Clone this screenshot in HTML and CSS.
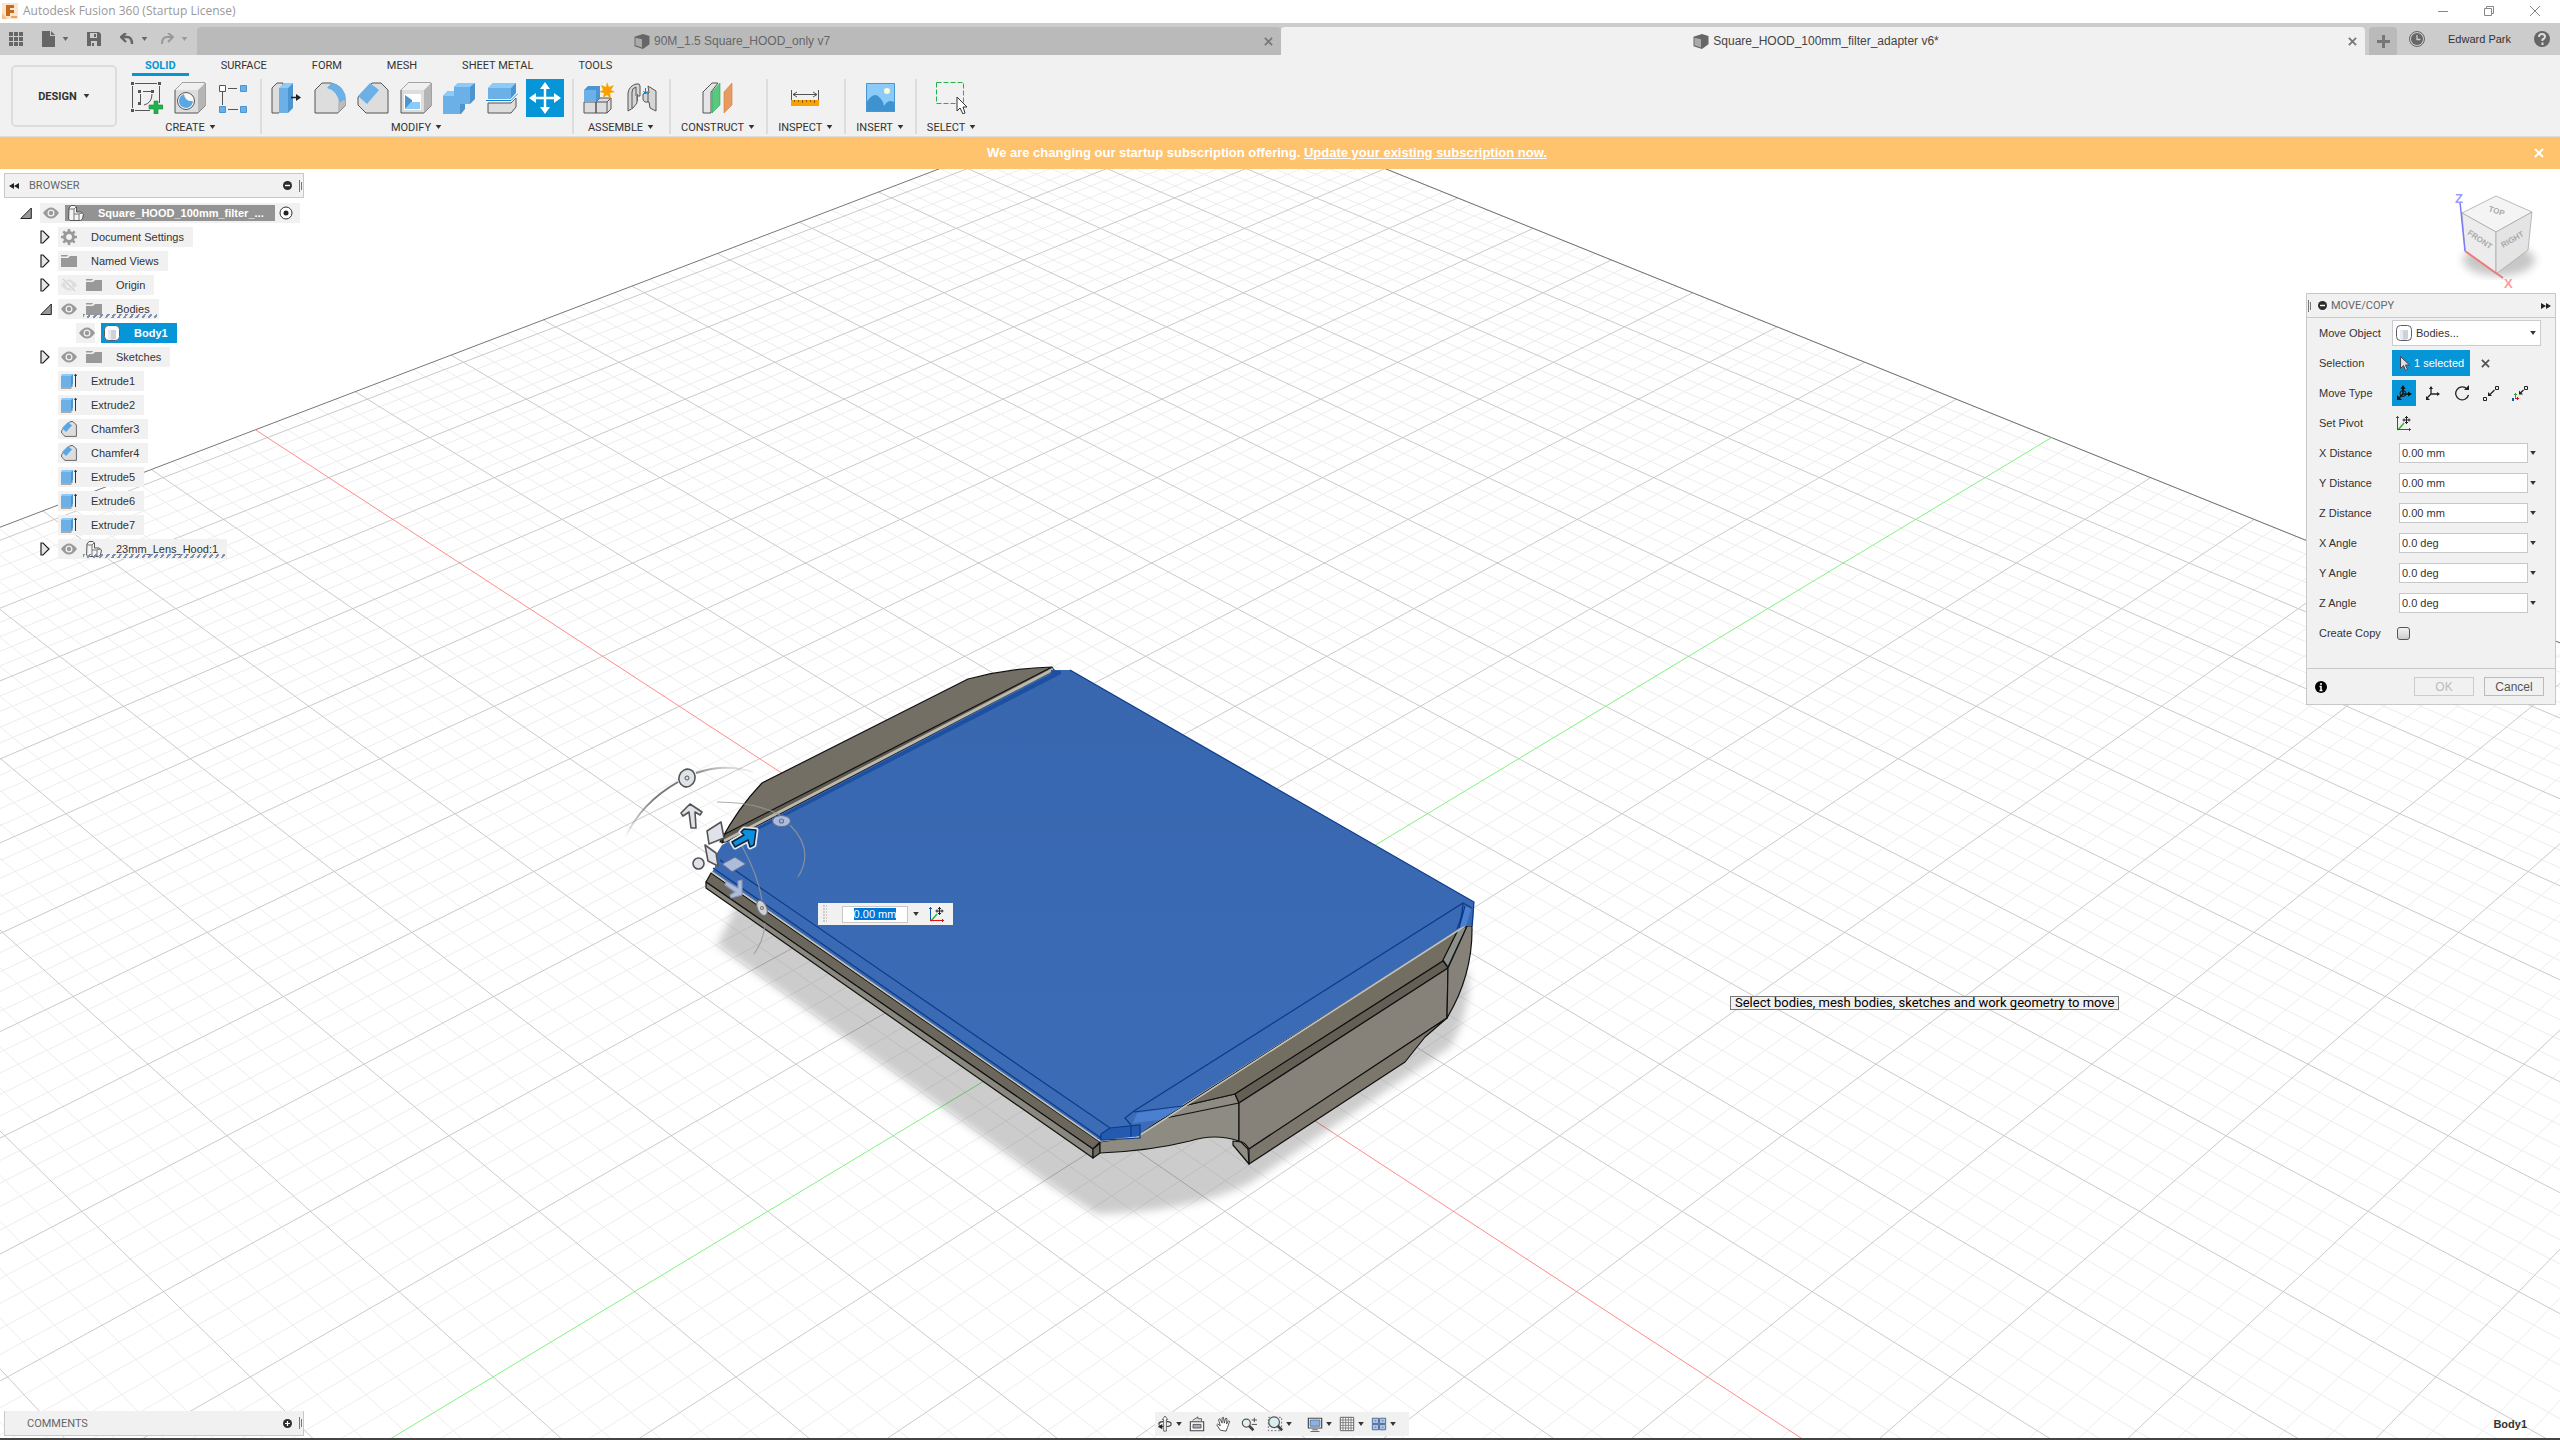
FILE: index.html
```html
<!DOCTYPE html>
<html lang="en">
<head>
    <meta charset="UTF-8">
    <meta name="viewport" content="width=device-width, initial-scale=1.0">
    <title>Autodesk Fusion 360 (Startup License)</title>
    <link rel="stylesheet" href="styles.css">
</head>
<body>
    <!-- shared icons -->
    <svg class="defs" aria-hidden="true">
        <symbol id="i-caret" viewBox="0 0 7 5"><path d="M0 0h7L3.5 5z" fill="currentColor"/></symbol>
        <symbol id="i-eye" viewBox="0 0 16 16"><path d="M0 8Q4 2.500 8 2.500T16 8Q12 13.500 8 13.500T0 8z" fill="#999"/><circle cx="8" cy="8" r="3.500" fill="#f1f1f1"/><circle cx="8" cy="8" r="2.200" fill="#999"/></symbol>
        <symbol id="i-eye-off" viewBox="0 0 16 16"><path d="M0 8Q4 2.500 8 2.500T16 8Q12 13.500 8 13.500T0 8z" fill="#dedede"/><circle cx="8" cy="8" r="3" fill="#f1f1f1"/><path d="M2 2l12 12" stroke="#f1f1f1" stroke-width="3"/><path d="M2 2l12 12" stroke="#d4d4d4" stroke-width="1.500"/></symbol>
        <symbol id="i-folder" viewBox="0 0 16 16"><path d="M0 2h7l-1 1.500H0zM0 5h7l2-2h7v11H0z" fill="#999"/></symbol>
        <symbol id="i-gear" viewBox="0 0 16 16"><circle cx="8" cy="8" r="4.500" fill="none" stroke="#999" stroke-width="3"/><path d="M8 0v3M8 13v3M0 8h3M13 8h3M2.300 2.300l2 2M11.700 11.700l2 2M2.300 13.700l2-2M11.700 4.300l2-2" stroke="#999" stroke-width="2.600"/></symbol>
        <symbol id="i-extrude" viewBox="0 0 16 16"><path d="M0 14l3-2h9v1l-2 3H0z" fill="#aaa"/><path d="M0 3l2-2h10v10l-2 3H0z" fill="#4b96d1"/><path d="M0 3h10v11H0z" fill="#6bb1e8"/><path d="M0 3l2-2h10l-2 2z" fill="#8acbfa"/><path d="M14.500 14V2M13.500 3l1-2 1 2" stroke="#333" fill="none"/></symbol>
        <symbol id="i-chamfer" viewBox="0 0 16 16"><path d="M.6 9.500L9 .6h3l3.400 3.400v11.400H4L.6 12z" fill="#ddd" stroke="#666"/><path d="M1 7l6-6 4 3.500-6 6.500z" fill="#5ba7e3"/></symbol>
        <symbol id="i-component" viewBox="0 0 16 16"><path d="M1 3l2-2.500h4L8.500 2v5H13l2.500 2-1 5-2 1.500H2L.6 14z" fill="#f4f4f4" stroke="#555"/><path d="M1 4h5v11M6 9h5l3-1M11 9v6M6 4l2-2" fill="none" stroke="#777"/></symbol>
        <symbol id="i-body" viewBox="0 0 16 16"><rect x=".5" y=".5" width="15" height="15" rx="4" fill="#fff" stroke="#555c6b"/><path d="M4 5h8v9q-4 1.500-8 0z" fill="#ccd2da"/><path d="M4 5h3v9.500l-3-.5z" fill="#e8ebef"/></symbol>
        <symbol id="i-open" viewBox="0 0 12 12"><path d="M.8 11.500L11.300 1v10.500z" fill="#999" stroke="#222"/></symbol>
        <symbol id="i-closed" viewBox="0 0 10 14"><path d="M1 1v12h2l6-6-6-6z" fill="#e6e6e6" stroke="#222" stroke-width="1.200"/></symbol>
        <symbol id="i-doc" viewBox="0 0 16 16"><path d="M0 3l9-3 7 2v9l-7 5-9-3z" fill="currentColor"/><path d="M1 4l7 1.500v9L1 12z" fill="#aaa"/></symbol>
        <symbol id="i-minus" viewBox="0 0 9 9"><circle cx="4.500" cy="4.500" r="4.500" fill="#2d2d2d"/><path d="M2 4.500h5" stroke="#fff" stroke-width="1.400"/></symbol>
        <symbol id="i-plus" viewBox="0 0 9 9"><circle cx="4.500" cy="4.500" r="4.500" fill="#2d2d2d"/><path d="M2 4.500h5M4.500 2v5" stroke="#fff" stroke-width="1.200"/></symbol>
        <symbol id="i-grip" viewBox="0 0 4 12"><path d="M.5 0v12M2.500 2v8" stroke="#777"/></symbol>
        <symbol id="i-rewind" viewBox="0 0 10 6"><path d="M5 0v6L0 3zM10 0v6L5 3z" fill="#222"/></symbol>
        <symbol id="i-pivot" viewBox="0 0 16 16"><path d="M2 15L8 8" stroke="#2fb52f" stroke-width="1.500"/><path d="M1.500 14V1M0 2.500h3" stroke="#0b5cad"/><path d="M1 14.500h14M13.500 13v3" stroke="#d11"/><path d="M10.500 1v8M6.500 5h8M9 2.500h3M9 7.500h3M8 3.500v3M13 3.500v3" stroke="#222"/></symbol>
        <symbol id="i-x" viewBox="0 0 10 10"><path d="M1 1l8 8M9 1L1 9" stroke="currentColor" stroke-width="2"/></symbol>
    </svg>

    <header>
        <div class="titlebar">
            <svg class="app-logo" viewBox="0 0 16 16"><path d="M0 0h16v16H0z" fill="#fde5cd"/><path d="M0 10l5 6H0z" fill="#f6bd85"/><path d="M4 2h8v3H8v2h4v3H8v3H4z" fill="#c46a1c"/><path d="M9 13h6v2H9z" fill="#f3a35c"/></svg>
            <h1>Autodesk Fusion 360 (Startup License)</h1>
            <div class="window-buttons">
                <button aria-label="Minimize"><svg viewBox="0 0 10 10"><path d="M0 5.500h10"/></svg></button>
                <button aria-label="Restore"><svg viewBox="0 0 10 10"><path d="M.5 2.500h7v7h-7zM2.500 2.500v-2h7v7h-2"/></svg></button>
                <button aria-label="Close"><svg viewBox="0 0 10 10"><path d="M0 0l10 10M10 0L0 10"/></svg></button>
            </div>
        </div>

        <div class="tabbar">
            <div class="quick">
                <button class="q-grid" aria-label="Data panel"><svg width="14" height="14" viewBox="0 0 14 14"><path d="M0 0h4v4H0zM5 0h4v4H5zM10 0h4v4h-4zM0 5h4v4H0zM5 5h4v4H5zM10 5h4v4h-4zM0 10h4v4H0zM5 10h4v4H5zM10 10h4v4h-4z" fill="#666"/></svg></button>
                <button class="q-file" aria-label="File"><svg width="13" height="16" viewBox="0 0 13 16"><path d="M0 0h8v5h5v11H0z" fill="#666"/><path d="M9 0l4 4H9z" fill="#666"/></svg><svg class="caret"><use href="#i-caret"/></svg></button>
                <button class="q-save" aria-label="Save"><svg width="14" height="14" viewBox="0 0 14 14"><path d="M0 0h12l2 2v12H0z" fill="#666"/><path d="M3 1h7v5H3zM4 9h6v5H4z" fill="#ccc"/><path d="M7 2h2v3H7zM5 11h2v3H5z" fill="#666"/></svg></button>
                <button class="q-undo" aria-label="Undo"><svg width="14" height="12" viewBox="0 0 14 12"><path d="M6 0L1 4l5 5M1 4h6q5 0 5 7" fill="none" stroke="#666" stroke-width="2.400"/></svg><svg class="caret"><use href="#i-caret"/></svg></button>
                <button class="q-redo" aria-label="Redo"><svg width="14" height="12" viewBox="0 0 14 12"><path d="M8 0l5 4-5 5M13 4H7q-5 0-5 7" fill="none" stroke="#999" stroke-width="2"/></svg><svg class="caret"><use href="#i-caret"/></svg></button>
            </div>
            <div class="doc-tab">
                <svg class="doc-icon"><use href="#i-doc"/></svg>
                <span>90M_1.5 Square_HOOD_only v7</span>
                <button class="tab-close" aria-label="Close tab"><svg><use href="#i-x"/></svg></button>
            </div>
            <div class="doc-tab active">
                <svg class="doc-icon"><use href="#i-doc"/></svg>
                <span>Square_HOOD_100mm_filter_adapter v6*</span>
                <button class="tab-close" aria-label="Close tab"><svg><use href="#i-x"/></svg></button>
            </div>
            <button class="new-tab" aria-label="New tab"><svg width="13" height="13" viewBox="0 0 13 13"><path d="M0 6.500h13M6.500 0v13" stroke="#777" stroke-width="3"/></svg></button>
            <div class="account">
                <button aria-label="Job status"><svg width="16" height="16" viewBox="0 0 16 16"><circle cx="8" cy="8" r="7.500" fill="none" stroke="#666"/><circle cx="8" cy="8" r="6" fill="#666"/><path d="M8 4v4.500h3.500" fill="none" stroke="#ccc" stroke-width="1.300"/></svg></button>
                <button class="user">Edward Park</button>
                <button aria-label="Help"><svg width="16" height="16" viewBox="0 0 16 16"><circle cx="8" cy="8" r="8" fill="#666"/><path d="M5 6q0-3 3-3t3 2.700Q11 7.500 8.500 8.500V10M8.500 11.500V14" fill="none" stroke="#ddd" stroke-width="2"/></svg></button>
            </div>
        </div>

        <div class="ribbon">
            <button class="workspace">DESIGN <svg class="caret"><use href="#i-caret"/></svg></button>
            <div class="ribbon-main">
                <nav class="ribbon-tabs">
                    <button class="on">SOLID</button>
                    <button>SURFACE</button>
                    <button>FORM</button>
                    <button>MESH</button>
                    <button>SHEET METAL</button>
                    <button>TOOLS</button>
                </nav>
                <div class="groups">
                    <div class="group">
                        <div class="tools">
                            <button aria-label="Create sketch"><svg viewBox="0 0 32 32"><path d="M4 1.500h22M1.500 4v22M28.500 4v17M4 28.500h15M12 9.500h8M9.500 12v8M21 12q0 9-8 11" fill="none" stroke="#555"/><path d="M0 0h3v3H0zM27 0h3v3h-3zM0 27h3v3H0zM7 8h3v3H7zM20 8h3v3h-3zM7 20h3v3H7z" fill="#555"/><path d="M23 19h4v4h5v4h-5v5h-4v-5h-5v-4h5z" fill="#22b14c" stroke="#178a39" stroke-width=".6"/></svg></button>
                            <button aria-label="Create form"><svg viewBox="0 0 32 32"><path d="M1 8l7-7h23v23l-7 7H1z" fill="#ddd" stroke="#555"/><path d="M24 8l7-7v23l-7 7z" fill="#b5b5b5"/><path d="M1 8l7-7h23l-7 7z" fill="#efefef"/><circle cx="12" cy="19" r="8.500" fill="#f8f8f8" stroke="#555"/><path d="M10 12q1 8 9 7-1 7-7 7-7-1-7-7 0-5 5-7z" fill="#5ba7e3"/></svg></button>
                            <button aria-label="Derive"><svg viewBox="0 0 32 32"><path d="M11 6.500h9M5.500 10v13M11 27.500h10" stroke="#555"/><path d="M2.500 3.500h6v6h-6z" fill="#fff" stroke="#555"/><path d="M23.500 3.500h6v6h-6zM2.500 24.500h6v6h-6zM23.500 24.500h6v6h-6z" fill="#6bb1e8" stroke="#4b96d1"/></svg></button>
                        </div>
                        <button class="group-label">CREATE <svg class="caret"><use href="#i-caret"/></svg></button>
                    </div>
                    <div class="group">
                        <div class="tools">
                            <button aria-label="Press pull"><svg viewBox="0 0 32 32"><path d="M1 6l5-5h6v25l-4 5H1z" fill="#ddd" stroke="#555"/><path d="M8 6h9v25H8z" fill="#6bb1e8"/><path d="M8 6l5-5h9l-5 5z" fill="#8acbfa"/><path d="M17 6l5-5v25l-5 5z" fill="#4b96d1"/><path d="M20 15.500h7" stroke="#222" stroke-width="1.500"/><path d="M25 12l5 3.500-5 3.500z" fill="#222"/></svg></button>
                            <button aria-label="Fillet"><svg viewBox="0 0 32 32"><path d="M1 31V8l7-7h9q14 3 14 18v5l-7 7z" fill="#ddd" stroke="#555"/><path d="M24 21l7-3v6l-7 7z" fill="#bbb"/><path d="M13 6q4-5 6-5 12 4 13 16l-7 4Q24 9 13 6z" fill="#6bb1e8"/></svg></button>
                            <button aria-label="Chamfer"><svg viewBox="0 0 32 32"><path d="M1 15v8l8 8h22V8l-7-7h-9z" fill="#ddd" stroke="#555"/><path d="M1 14L13 1l9 7-12 14z" fill="#6bb1e8"/></svg></button>
                            <button aria-label="Shell"><svg viewBox="0 0 32 32"><path d="M1 8l7-7h23v23l-7 7H1z" fill="#ddd" stroke="#555"/><path d="M24 8l7-7v23l-7 7z" fill="#b5b5b5"/><path d="M1 8l7-7h23l-7 7z" fill="#efefef"/><path d="M4 12h17v16H4z" fill="#fff"/><path d="M5 13l7 5v3l-7 6z" fill="#4b96d1"/><path d="M5 27l6-7h9v7z" fill="#8acbfa"/></svg></button>
                            <button aria-label="Combine"><svg viewBox="0 0 32 32"><path d="M0 14l5-5h6V5l4-4h17v16l-5 5h-5v5l-4 5H0z" fill="#4b96d1"/><path d="M0 14h11V5h16v17H17v10H0z" fill="#6bb1e8"/><path d="M11 5l4-4h17l-5 4zM0 14l5-5h6v5z" fill="#8acbfa"/></svg></button>
                            <button aria-label="Split body"><svg viewBox="0 0 32 32"><path d="M2 6l5-5h23l-5 5v11H2z" fill="#6bb1e8"/><path d="M2 6l5-5h23l-5 5z" fill="#8acbfa"/><path d="M25 6l5-5v10l-5 6z" fill="#4b96d1"/><path d="M2 21h23l5-5v9l-5 6H2z" fill="#ddd" stroke="#555"/><path d="M0 18.500h25l7-7" fill="none" stroke="#fff" stroke-width="3"/><path d="M0 18.500h25l7-7" fill="none" stroke="#0a84d8"/></svg></button>
                            <button class="active" aria-label="Move/Copy"><svg viewBox="0 0 32 32"><path d="M16 5v22M5 16h22" stroke="#fff" stroke-width="2.400"/><path d="M16 0l5 7H11zM16 32l5-7H11zM0 16l7-5v10zM32 16l-7-5v10z" fill="#fff"/></svg></button>
                        </div>
                        <button class="group-label">MODIFY <svg class="caret"><use href="#i-caret"/></svg></button>
                    </div>
                    <div class="group">
                        <div class="tools">
                            <button aria-label="New component"><svg viewBox="0 0 32 32"><path d="M1 20h12v11H1zM13 20l4-4h11v11l-4 4H13z" fill="#ddd" stroke="#555"/><path d="M13 20h11v11M24 20l4-4" fill="none" stroke="#555"/><path d="M1 8l4-4h12v12l-4 4H1z" fill="#4b96d1"/><path d="M1 8h12v12H1z" fill="#6bb1e8"/><path d="M24 0l2 5 5-2-3 5 4 2-5 1 1 6-4-4-4 3 1-5-5-1 4-2-2-5 5 2z" fill="#f8a100"/></svg></button>
                            <button aria-label="Joint"><svg viewBox="0 0 32 32"><path d="M2 11q1-7 8-9 4-1 4 2v10h-3v7l-4 5-5 3z" fill="#d5d5d5" stroke="#555"/><path d="M6 10q0-4 4-5v9M6 10v16" fill="none" stroke="#555"/><path d="M22 4l8 5v20l-6-3-1-6h-4q-2-1-2-3v-5q3-2 6-1z" fill="#d5d5d5" stroke="#555"/><path d="M22 11v9" fill="none" stroke="#555"/><path d="M11.500 12v7M19.500 6v6M17.500 9l2 3 2-3" fill="none" stroke="#0a84d8"/></svg></button>
                        </div>
                        <button class="group-label">ASSEMBLE <svg class="caret"><use href="#i-caret"/></svg></button>
                    </div>
                    <div class="group">
                        <div class="tools">
                            <button aria-label="Offset plane"><svg viewBox="0 0 32 32"><path d="M1 10l9-9h6L9 10v21H1z" fill="#e5e5e5" stroke="#555"/><path d="M10 10l8-9v22l-8 8z" fill="#59c77e" stroke="#2ea85a" stroke-width=".6"/><path d="M22 10l8-9v22l-8 8z" fill="#e89a63" stroke="#d4793a" stroke-width=".6"/></svg></button>
                        </div>
                        <button class="group-label">CONSTRUCT <svg class="caret"><use href="#i-caret"/></svg></button>
                    </div>
                    <div class="group">
                        <div class="tools">
                            <button aria-label="Measure"><svg viewBox="0 0 32 32"><path d="M2.500 8v10M29.500 8v10M4 12.500h24M8 10l-4 2.500L8 15M24 10l4 2.500-4 2.500" fill="none" stroke="#555"/><path d="M2 18h28v6H2z" fill="#f8a100"/><path d="M5.500 18v2M9.500 18v2M13.500 18v3M17.500 18v2M21.500 18v2M25.500 18v3" stroke="#8a5a00"/></svg></button>
                        </div>
                        <button class="group-label">INSPECT <svg class="caret"><use href="#i-caret"/></svg></button>
                    </div>
                    <div class="group">
                        <div class="tools">
                            <button aria-label="Insert image"><svg viewBox="0 0 32 32"><path d="M2 1h29v29H2z" fill="#8acbfa"/><path d="M2 21q7-11 12-7t6 10q5-8 11-3v9H2z" fill="#3d92cf"/><circle cx="23" cy="9" r="3" fill="#fffbd0"/><path d="M2.500 1.500h28v28h-28z" fill="none" stroke="#4b96d1"/></svg></button>
                        </div>
                        <button class="group-label">INSERT <svg class="caret"><use href="#i-caret"/></svg></button>
                    </div>
                    <div class="group">
                        <div class="tools">
                            <button aria-label="Select"><svg viewBox="0 0 32 32"><path d="M1.500.5h27v21h-27z" fill="none" stroke="#22b14c" stroke-dasharray="5 2"/><path d="M22 15v14l3-3 3 6 2-1-2-6h4z" fill="#fff" stroke="#333"/></svg></button>
                        </div>
                        <button class="group-label">SELECT <svg class="caret"><use href="#i-caret"/></svg></button>
                    </div>
                </div>
            </div>
        </div>

        <div class="banner">
            <p>We are changing our startup subscription offering. <a href="#">Update your existing subscription now.</a></p>
            <button aria-label="Dismiss"><svg><use href="#i-x"/></svg></button>
        </div>
    </header>

    <main>
        <svg class="scene" viewBox="0 169 2560 1269" preserveAspectRatio="xMidYMin slice">
            <defs>
                <filter id="soft" x="-10%" y="-10%" width="120%" height="120%"><feGaussianBlur stdDeviation="4"/></filter>
                <linearGradient id="top" x1="0" y1="0" x2="0" y2="1"><stop offset="0" stop-color="#3867b0"/><stop offset="1" stop-color="#3b6cb5"/></linearGradient>
                <linearGradient id="ring1" x1="0" y1="1" x2="1" y2="0"><stop offset="0" stop-color="#777" stop-opacity="0"/><stop offset=".4" stop-color="#777"/><stop offset=".7" stop-color="#777"/><stop offset="1" stop-color="#777" stop-opacity="0"/></linearGradient>
            </defs>
            <g id="grid"></g>

            <path d="M737 905L717 945L1050 1185L1097 1214Q1190 1212 1250 1183L1450 1047Q1472 1010 1468 970L1250 1000z" fill="#000" fill-opacity=".2" filter="url(#soft)"/>

            <!-- hood -->
            <g stroke="#111" stroke-width="1.200" stroke-linejoin="round">
                <path d="M1052 667Q1010 668 968 679L762 783Q738 808 720 842L726 842L1055 672z" fill="#736f64"/>
                <path d="M725 834L1050 668L1056 671L722 843z" fill="#5e5a50"/>
                <path d="M711 873L706 882L1093 1149L1100 1142z" fill="#6c675d"/>
                <path d="M706 882V888L1093 1158V1149z" fill="#8a877e"/>
                <path d="M1100 1143V1153L1093 1158V1149z" fill="#6f6b61"/>
                <path d="M1100 1142L1134 1137L1183 1106L1235 1094L1239 1103V1141Q1215 1133 1190 1141Q1150 1151 1100 1153z" fill="#8e8b83"/>
                <path d="M1465 926L1458 930L1443 961L1235 1094L1183 1106z" fill="#736e62"/>
                <path d="M1443 961L1448 968L1239 1103L1235 1094z" fill="#645f55"/>
                <path d="M1448 968L1447 1018L1249 1149Q1245 1142 1239 1141V1103z" fill="#86827a"/>
                <path d="M1447 1018L1425 1037L1405 1062L1249 1164V1149z" fill="#7b776c"/>
                <path d="M1233 1141V1145L1249 1164L1248 1149L1241 1142z" fill="#8f8c84"/>
                <path d="M1467 926H1472Q1473 975 1447 1018L1448 968z" fill="#86827a"/>
                <path d="M1458 930L1467 926L1448 967L1443 960z" fill="#8b908b"/>
                <path d="M1161 1119L1239 1103" fill="none"/>
            </g>

            <!-- selected body -->
            <path d="M1070 670L1474 902L1473 926H1465L1162 1118L1137 1136L1100 1141L712 872L715 867L717 853L722 845L1050 673L1054 670z" fill="url(#top)"/>
            <path d="M724 841L1048 672L1053 669" fill="none" stroke="#bcb8ae" stroke-width="3"/>
            <path d="M727 843L1051 674V670L1061 671V674L762 828z" fill="#1d50a0"/>
            <path d="M712 872L1100 1141L1137 1137L1465 926" fill="none" stroke="#c6c2b8" stroke-width="1.600"/>
            <path d="M1097 1138L1110 1128L1140 1125V1136L1101 1140z" fill="#245bb0"/>
            <path d="M1137 1113L1183 1106L1160 1120L1133 1123z" fill="#4b80d0"/>
            <path d="M1465 906L1471 909L1466 926L1459 928z" fill="#4b80d0"/>
            <path d="M1070 670L1474 902L1472 926M713 868L1101 1138M720 860L1110 1128L1140 1125V1138L1101 1140V1134L1110 1128M1131 1125L1125 1118L1134 1111L1463 903L1472 908M1134 1112L1183 1106M1131 1125V1137M1463 904Q1462 918 1457 929M1465 906L1459 928" fill="none" stroke="#0c3a8a" stroke-width="1.200"/>

            <!-- move manipulator -->
            <g fill="none" stroke="url(#ring1)" stroke-width="2">
                <path d="M625 838Q641 803 678 782M696 773Q725 763 753 772"/>
            </g>
            <g fill="none" stroke="#999" stroke-width="1.200">
                <path d="M717 802Q755 802 780 815M790 825Q815 850 798 877M742 846Q758 875 762 900M765 923Q764 940 754 954" stroke-opacity=".8"/>
            </g>
            <g fill="#dfe2e8" stroke="#555" stroke-width="1.600" stroke-linejoin="round">
                <ellipse cx="687" cy="778" rx="8" ry="9" transform="rotate(20 687 778)"/>
                <circle cx="687" cy="778" r="2" stroke-width="1"/>
                <path d="M690 804L681 813L683 816L689 812L691 828H696L695 812L700 815L702 812z"/>
                <path d="M707 831L721 822L724 838L709 844z"/>
                <path d="M705 845L716 853L718 866L708 861z"/>
                <circle cx="698.500" cy="863.500" r="5.500"/>
            </g>
            <g fill="#aebcdb" stroke="#5c6f9b" stroke-width="1.200" stroke-linejoin="round">
                <ellipse cx="781.500" cy="821" rx="9" ry="5.500"/>
                <circle cx="781.500" cy="821" r="2"/>
                <path d="M722 864L735 857L746 864L732 872z"/>
                <path d="M726 881L738 888V881L742 880V895L731 898L730 895L735 892L725 885z" stroke="#8798bb"/>
                <ellipse cx="762" cy="908" rx="4.500" ry="8" transform="rotate(-25 762 908)" fill="#cfd2d8" stroke="#777"/>
                <circle cx="762" cy="908" r="1.500" fill="#cfd2d8" stroke="#777"/>
            </g>
            <path d="M732 842L744 835L741 832L744 829L756 830L754 845L750 847L748 840L735 847z" fill="#0c8fdc" stroke="#dfe8f6" stroke-width="5" stroke-linejoin="round"/>
            <path d="M732 842L744 835L741 832L744 829L756 830L754 845L750 847L748 840L735 847z" fill="#0c8fdc" stroke="#123" stroke-width="1.500" stroke-linejoin="round"/>
        </svg>

        <section class="browser">
            <div class="panel-head">
                <svg class="rewind"><use href="#i-rewind"/></svg>
                <h2>BROWSER</h2>
                <svg class="dot"><use href="#i-minus"/></svg>
                <svg class="grip"><use href="#i-grip"/></svg>
            </div>
            <ul class="tree">
                <li class="root"><svg class="open"><use href="#i-open"/></svg><div class="chip"><svg><use href="#i-eye"/></svg><span class="name"><svg><use href="#i-component"/></svg>Square_HOOD_100mm_filter_...</span><svg class="target" viewBox="0 0 16 16"><circle cx="8" cy="8" r="6" fill="#fff" stroke="#333"/><circle cx="8" cy="8" r="2.500" fill="#222"/></svg></div></li>
                <li><svg class="closed"><use href="#i-closed"/></svg><div class="chip"><svg><use href="#i-gear"/></svg>Document Settings</div></li>
                <li><svg class="closed"><use href="#i-closed"/></svg><div class="chip"><svg><use href="#i-folder"/></svg>Named Views</div></li>
                <li><svg class="closed"><use href="#i-closed"/></svg><div class="chip"><svg><use href="#i-eye-off"/></svg><span class="name"><svg><use href="#i-folder"/></svg>Origin</span></div></li>
                <li><svg class="open"><use href="#i-open"/></svg><div class="chip"><svg><use href="#i-eye"/></svg><span class="name hatch"><svg><use href="#i-folder"/></svg>Bodies</span></div></li>
                <li class="child"><div class="chip selected"><svg><use href="#i-eye"/></svg><span class="name"><svg><use href="#i-body"/></svg>Body1</span></div></li>
                <li><svg class="closed"><use href="#i-closed"/></svg><div class="chip"><svg><use href="#i-eye"/></svg><span class="name"><svg><use href="#i-folder"/></svg>Sketches</span></div></li>
                <li class="feature"><div class="chip"><svg><use href="#i-extrude"/></svg>Extrude1</div></li>
                <li class="feature"><div class="chip"><svg><use href="#i-extrude"/></svg>Extrude2</div></li>
                <li class="feature"><div class="chip"><svg><use href="#i-chamfer"/></svg>Chamfer3</div></li>
                <li class="feature"><div class="chip"><svg><use href="#i-chamfer"/></svg>Chamfer4</div></li>
                <li class="feature"><div class="chip"><svg><use href="#i-extrude"/></svg>Extrude5</div></li>
                <li class="feature"><div class="chip"><svg><use href="#i-extrude"/></svg>Extrude6</div></li>
                <li class="feature"><div class="chip"><svg><use href="#i-extrude"/></svg>Extrude7</div></li>
                <li><svg class="closed"><use href="#i-closed"/></svg><div class="chip"><svg><use href="#i-eye"/></svg><span class="name hatch"><svg><use href="#i-component"/></svg>23mm_Lens_Hood:1</span></div></li>
            </ul>
        </section>

        <aside>
            <svg class="viewcube" width="100" height="106" viewBox="2446 187 100 106">
                <ellipse cx="2499" cy="260" rx="36" ry="16" fill="#000" fill-opacity=".22" filter="url(#soft)"/>
                <g fill="#ececec" stroke="#aaa" stroke-width=".8">
                    <path d="M2496 196L2532 212L2496 232L2462 213z" fill="#f4f4f4"/>
                    <path d="M2462 213L2496 232V274L2465 251z"/>
                    <path d="M2532 212L2496 232V274L2528 250z" fill="#e4e4e4"/>
                </g>
                <path d="M2460 202L2465 251" stroke="#7a7af5" stroke-width="1.500"/>
                <path d="M2465 251L2503 278" stroke="#ee7b7b" stroke-width="2"/>
                <text x="2455" y="203" class="axis-z">Z</text>
                <text x="2504" y="288" class="axis-x">X</text>
                <text class="face" transform="translate(2488 211) rotate(18)">TOP</text>
                <text class="face" transform="translate(2467 234) rotate(34)">FRONT</text>
                <text class="face" transform="translate(2503 248) rotate(-30)">RIGHT</text>
            </svg>

            <form class="dialog">
                <div class="dialog-head">
                    <svg class="grip"><use href="#i-grip"/></svg>
                    <svg class="dot"><use href="#i-minus"/></svg>
                    <h2>MOVE/COPY</h2>
                    <svg class="rewind forward"><use href="#i-rewind"/></svg>
                </div>
                <div class="rows">
                    <div class="row">
                        <label for="object">Move Object</label>
                        <div class="select-wrap"><svg class="select-icon"><use href="#i-body"/></svg><select id="object"><option>Bodies...</option></select><svg class="caret"><use href="#i-caret"/></svg></div>
                    </div>
                    <div class="row">
                        <span class="label">Selection</span>
                        <button type="button" class="picker"><svg width="10" height="15" viewBox="0 0 10 15"><path d="M.5.5v12l3-3 2 5 2-1-2-4.500h4z" fill="#ddd" stroke="#445"/></svg>1 selected</button>
                        <button type="button" class="clear" aria-label="Clear selection"><svg><use href="#i-x"/></svg></button>
                    </div>
                    <div class="row types">
                        <span class="label">Move Type</span>
                        <button type="button" class="on" aria-label="Free move"><svg viewBox="0 0 16 16"><path d="M7 2v7h7M7 9l-5 5" fill="none" stroke="#111" stroke-width="1.500"/><path d="M4.500 4L7 0l2.500 4zM12 6.500L16 9l-4 2.500zM1 10v5h5z" fill="#111"/><circle cx="7" cy="8.500" r="3" fill="none" stroke="#111"/></svg></button>
                        <button type="button" aria-label="Translate"><svg viewBox="0 0 16 16"><path d="M6 2v7h8M6 9l-4 4" fill="none" stroke="#222" stroke-width="1.300"/><path d="M4 4l2-3 2 3zM12 7l3 2-3 2zM1 11v4h4z" fill="#222"/></svg></button>
                        <button type="button" aria-label="Rotate"><svg viewBox="0 0 16 16"><path d="M13 4a6.500 6.500 0 1 0 1.500 6" fill="none" stroke="#222" stroke-width="1.300"/><path d="M10 5h5V0z" fill="#222"/></svg></button>
                        <button type="button" aria-label="Point to point"><svg viewBox="0 0 16 16"><path d="M11.500 5L7 9.500" stroke="#222" stroke-width="1.300"/><path d="M5 7v4h4z" fill="#222"/><path d="M12.500 1.500h3v3h-3zM.5 12.500h3v3h-3z" fill="none" stroke="#222"/></svg></button>
                        <button type="button" aria-label="Point to position"><svg viewBox="0 0 16 16"><path d="M11.500 5L8 8.500" stroke="#222" stroke-width="1.300"/><path d="M7 5.500v4h4z" fill="#222"/><path d="M12.500 1.500h3v3h-3z" fill="none" stroke="#222"/><path d="M3.500 13V8M2 9.500h3" stroke="#2a2"/><path d="M3 13.500h4M5.500 12v3" stroke="#d11"/><path d="M0 13h2v3H0z" fill="#0b5cad"/></svg></button>
                    </div>
                    <div class="row">
                        <span class="label">Set Pivot</span>
                        <button type="button" class="pivot" aria-label="Set pivot"><svg><use href="#i-pivot"/></svg></button>
                    </div>
                    <div class="row"><label for="xd">X Distance</label><input type="text" id="xd" value="0.00 mm"><svg class="caret"><use href="#i-caret"/></svg></div>
                    <div class="row"><label for="yd">Y Distance</label><input type="text" id="yd" value="0.00 mm"><svg class="caret"><use href="#i-caret"/></svg></div>
                    <div class="row"><label for="zd">Z Distance</label><input type="text" id="zd" value="0.00 mm"><svg class="caret"><use href="#i-caret"/></svg></div>
                    <div class="row"><label for="xa">X Angle</label><input type="text" id="xa" value="0.0 deg"><svg class="caret"><use href="#i-caret"/></svg></div>
                    <div class="row"><label for="ya">Y Angle</label><input type="text" id="ya" value="0.0 deg"><svg class="caret"><use href="#i-caret"/></svg></div>
                    <div class="row"><label for="za">Z Angle</label><input type="text" id="za" value="0.0 deg"><svg class="caret"><use href="#i-caret"/></svg></div>
                    <div class="row"><label for="copy">Create Copy</label><input type="checkbox" id="copy"></div>
                </div>
                <div class="dialog-foot">
                    <svg class="info" viewBox="0 0 12 12"><circle cx="6" cy="6" r="6"/><path d="M6 2v2M4.500 5.500H6V9M4.500 9.500h3" stroke="#fff" stroke-width="1.500" fill="none"/></svg>
                    <button type="button" disabled>OK</button>
                    <button type="button">Cancel</button>
                </div>
            </form>
        </aside>

        <div class="value-box">
            <span class="dots"></span>
            <input type="text" id="value" aria-label="Distance" value="0.00 mm">
            <svg class="caret"><use href="#i-caret"/></svg>
            <svg class="pivot-icon"><use href="#i-pivot"/></svg>
        </div>

        <div class="tooltip">Select bodies, mesh bodies, sketches and work geometry to move</div>

        <footer>
            <div class="panel-head comments">
                <h2>COMMENTS</h2>
                <svg class="dot"><use href="#i-plus"/></svg>
                <svg class="grip"><use href="#i-grip"/></svg>
            </div>
            <div class="navbar">
                <button aria-label="Orbit"><svg viewBox="0 0 18 18"><ellipse cx="9" cy="9" rx="7" ry="3" fill="none" stroke="#444" stroke-width="1.300"/><path d="M7.500 17V4H6l3-4 3 4h-1.500v13z" fill="#fff" stroke="#555"/><path d="M1 12l5-3v6z" fill="#222"/></svg><svg class="caret"><use href="#i-caret"/></svg></button>
                <button aria-label="Look at"><svg viewBox="0 0 18 18"><path d="M1.500 6.500h15v10h-15z" fill="#f4f4f4" stroke="#444" stroke-width="1.200"/><path d="M4.500 9.500h9v4h-9z" fill="#aab" stroke="#555"/><path d="M4 5l6-4v2h4v3" fill="#ddd" stroke="#555"/></svg></button>
                <button aria-label="Pan"><svg viewBox="0 0 18 18"><path d="M6 16L2 10l1-1 3 2L4 4l1.500-1L8 8V2l1.500-.5L10.500 8 12 2.500l1.500.5L13 9l2-3.500 1.500.5L14 13l-1.500 4z" fill="#fff" stroke="#444"/></svg></button>
                <button aria-label="Zoom"><svg viewBox="0 0 18 18"><circle cx="6" cy="8" r="4.500" fill="#e4f2f4" stroke="#555" stroke-width="1.300"/><path d="M9 11l5 5" stroke="#444" stroke-width="3"/><path d="M12 4.500h6M15 2v5M12 9.500h6" stroke="#444"/></svg></button>
                <button aria-label="Fit"><svg viewBox="0 0 18 18"><path d="M1.500 1.500h15v15h-15z" fill="none" stroke="#666" stroke-dasharray="2 2"/><circle cx="8" cy="7" r="6" fill="#d9eef0" stroke="#555" stroke-width="1.300"/><path d="M12 11l5 5" stroke="#444" stroke-width="3"/></svg><svg class="caret"><use href="#i-caret"/></svg></button>
                <button class="split" aria-label="Display settings"><svg viewBox="0 0 18 18"><path d="M1.500 2.500h15v11h-15z" fill="#fff" stroke="#444" stroke-width="1.300"/><path d="M3.500 4.500h11v7h-11z" fill="#8fb2dc" stroke="#4a70a8"/><path d="M6 15.500h6M4 17.500h10" stroke="#555"/></svg><svg class="caret"><use href="#i-caret"/></svg></button>
                <button aria-label="Grid and snaps"><svg viewBox="0 0 18 18"><path d="M1.500 1.500h15v15h-15z" fill="#fff" stroke="#555"/><path d="M4.500 1v16M7.500 1v16M10.500 1v16M13.500 1v16M1 4.500h16M1 7.500h16M1 10.500h16M1 13.500h16" stroke="#777"/></svg><svg class="caret"><use href="#i-caret"/></svg></button>
                <button aria-label="Viewports"><svg viewBox="0 0 18 18"><path d="M1.500 2.500h7v6h-7zM9.500 2.500h7v6h-7zM1.500 9.500h7v6h-7zM9.500 9.500h7v6h-7z" fill="#a9c6ea" stroke="#47618c"/><path d="M4 5h2v1H4zM12 5h2v1h-2zM4 12h2v1H4zM12 12h2v1h-2z" fill="#47618c"/></svg><svg class="caret"><use href="#i-caret"/></svg></button>
            </div>
            <span class="status">Body1</span>
        </footer>
    </main>

    <script src="grid.js"></script>
</body>
</html>
```

FILE: styles.css
```css
* {
    box-sizing: border-box;
}
body {
    margin: 0;
    height: 100vh;
    display: flex;
    flex-direction: column;
    overflow: hidden;
    font-family: "Liberation Sans", Arial, sans-serif;
    font-size: 11px;
    color: #333;
    background: #fff;
    border-bottom: 2px solid #444;
}
button {
    padding: 0;
    border: 0;
    background: none;
    font: inherit;
    color: inherit;
    display: flex;
    align-items: center;
}
h1, h2, p, ul {
    margin: 0;
    padding: 0;
    font-weight: normal;
}
svg {
    display: block;
    flex: none;
}
.defs {
    position: absolute;
    width: 0;
    height: 0;
}
.caret {
    width: 7px;
    height: 4px;
}

/* title bar */
.titlebar {
    height: 23px;
    display: flex;
    align-items: center;
    padding: 0 20px 2px 2px;
}
.app-logo {
    width: 16px;
    height: 16px;
}
.titlebar h1 {
    flex: 1;
    margin-left: 5px;
    font-family: "Open Sans", sans-serif;
    font-size: 12px;
    line-height: 16px;
    color: #999;
}
.window-buttons {
    display: flex;
    gap: 36px;
}
.window-buttons svg {
    width: 10px;
    height: 10px;
    fill: none;
    stroke: #888;
}

/* document tabs */
.tabbar {
    height: 32px;
    display: flex;
    align-items: stretch;
    background: #ccc;
}
.quick {
    width: 197px;
    display: flex;
    align-items: center;
    padding-left: 9px;
    color: #666;
}
.quick button {
    gap: 7px;
}
.q-file {
    margin-left: 19px;
}
.q-save {
    margin-left: 18px;
}
.q-undo {
    margin-left: 19px;
}
.q-redo {
    margin-left: 12px;
    color: #999;
}
.doc-tab {
    flex: 1;
    margin-top: 4px;
    padding-right: 14px;
    display: flex;
    align-items: center;
    justify-content: center;
    gap: 4px;
    position: relative;
    background: #bababa;
    color: #666;
    font-size: 12px;
    border-radius: 4px 4px 0 0;
}
.doc-tab.active {
    background: #f1f1f1;
    color: #444;
}
.doc-icon {
    width: 16px;
    height: 15px;
    color: #666;
}
.doc-tab .tab-close {
    position: absolute;
    right: 8px;
    color: #777;
}
.tab-close svg {
    width: 9px;
    height: 9px;
}
.new-tab {
    width: 28px;
    margin: 4px 0 0 4px;
    justify-content: center;
    background: #bababa;
    border-radius: 4px 4px 0 0;
}
.account {
    display: flex;
    align-items: center;
    gap: 23px;
    padding: 0 10px 0 12px;
}

/* ribbon */
.ribbon {
    height: 82px;
    display: flex;
    background: #f1f1f1;
    border-bottom: 1px solid #ddd;
    font-family: Roboto, sans-serif;
}
.workspace {
    width: 106px;
    height: 62px;
    margin: 10px 3px 0 11px;
    justify-content: center;
    gap: 6px;
    border: 2px solid #ddd;
    border-radius: 5px;
    font-weight: bold;
}
.ribbon-tabs {
    display: flex;
    gap: 19px;
    padding-left: 12px;
}
.ribbon-tabs button {
    height: 21px;
    padding: 3px 13px 0;
    border-bottom: 3px solid transparent;
}
.ribbon-tabs .on {
    color: #0696d7;
    font-weight: bold;
    border-color: #0696d7;
}
.groups {
    display: flex;
    padding-top: 3px;
}
.group {
    padding: 0 5px 0 4px;
    display: flex;
    flex-direction: column;
    align-items: center;
}
.group:first-child {
    padding-left: 6px;
}
.group:not(:last-child) {
    border-right: 2px solid #ddd;
}
.tools {
    display: flex;
}
.tools button {
    width: 38px;
    height: 38px;
    margin: 0 3px 0 2px;
    justify-content: center;
}
.tools .active {
    background: #0696d7;
}
.tools svg {
    width: 32px;
    height: 32px;
}
.group-label {
    height: 17px;
    padding: 3px 6px 0;
    gap: 4px;
}

/* banner */
.banner {
    height: 32px;
    display: flex;
    align-items: center;
    padding: 0 16px 1px 0;
    background: #ffc36d;
    color: #fff;
}
.banner p {
    flex: 1;
    text-align: center;
    font-size: 13px;
    font-weight: bold;
}
.banner a {
    color: #fff;
}
.banner svg {
    width: 10px;
    height: 10px;
}

/* viewport */
main {
    flex: 1;
    min-height: 0;
    position: relative;
    display: flex;
    justify-content: space-between;
    align-items: flex-start;
}
.scene {
    position: absolute;
    inset: 0;
    width: 100%;
    height: 100%;
}
.grid-minor {
    stroke: #ededed;
}
.grid-major {
    stroke: #cacaca;
}
.grid-edge {
    stroke: #777;
}
.axis-red {
    stroke: #ff8c8c;
}
.axis-green {
    stroke: #80f280;
}
.browser, aside {
    position: relative;
}

/* browser tree */
.browser {
    width: 300px;
    margin: 4px 0 0 4px;
}
.panel-head {
    height: 25px;
    display: flex;
    align-items: center;
    padding: 0 0 0 4px;
    background: #f1f1f1;
    border: 1px solid #c8c8c8;
}
.panel-head h2 {
    flex: 1;
    margin-left: 10px;
}
h2 {
    font-family: Roboto, sans-serif;
    font-size: 11px;
    color: #666;
}
.rewind {
    width: 10px;
    height: 6px;
}
.forward {
    transform: scaleX(-1);
}
.dot {
    width: 9px;
    height: 9px;
}
.panel-head .dot {
    margin-right: 7px;
}
.grip {
    width: 4px;
    height: 12px;
}
.tree {
    list-style: none;
    margin-top: 5px;
    display: flex;
    flex-direction: column;
    gap: 4px;
}
.tree li {
    display: flex;
    align-items: center;
    padding-left: 36px;
}
.tree .root {
    padding-left: 16px;
}
.tree .feature {
    padding-left: 54px;
}
.tree .child {
    padding-left: 72px;
}
.tree .closed {
    width: 10px;
    height: 14px;
    margin-right: 8px;
}
.tree .open {
    width: 12px;
    height: 12px;
    margin-right: 6px;
}
.tree .root .open {
    margin-right: 8px;
}
.chip {
    height: 20px;
    display: flex;
    align-items: center;
    padding: 0 9px 0 3px;
    background: #f1f1f1;
    white-space: nowrap;
}
.chip svg {
    width: 16px;
    height: 16px;
}
.chip > svg:first-child {
    margin-right: 14px;
}
.chip > svg:has(+ .name) {
    margin-right: 6px;
}
.name {
    height: 20px;
    display: flex;
    align-items: center;
    gap: 14px;
    padding-left: 3px;
    position: relative;
}
.root .chip {
    padding-right: 6px;
}
.root .name {
    width: 210px;
    height: 16px;
    margin-right: 3px;
    background: #939393;
    color: #fff;
    font-weight: bold;
}
.selected {
    padding: 0;
    background: none;
}
.selected > svg:first-child {
    box-sizing: content-box;
    padding: 2px 0 2px 3px;
    background: #f1f1f1;
}
.selected .name {
    padding-right: 9px;
    background: #0696d7;
    color: #fff;
    font-weight: bold;
}
.hatch::after {
    content: "";
    position: absolute;
    left: 0;
    right: -7px;
    bottom: 1px;
    height: 4px;
    background: repeating-linear-gradient(125deg, #8191b3 0 2px, transparent 2px 5px);
}

/* right side */
aside {
    width: 250px;
    margin: 18px 4px 0 0;
    display: flex;
    flex-direction: column;
}
.viewcube {
    align-self: flex-end;
    margin-right: 10px;
}
.axis-z, .axis-x {
    font-size: 13px;
    font-weight: bold;
    fill: #9a9aff;
}
.axis-x {
    fill: #ff9a9a;
}
.face {
    font-size: 8px;
    font-weight: bold;
    fill: #aaa;
}
.dialog {
    background: #f1f1f1;
    border: 1px solid #c8c8c8;
}
.dialog-head {
    height: 24px;
    display: flex;
    align-items: center;
    padding: 0 4px 0 1px;
    border-bottom: 1px solid #c8c8c8;
}
.dialog-head .dot {
    margin: 0 4px 0 6px;
}
.dialog-head h2 {
    flex: 1;
}
.rows {
    padding: 0 14px 20px 12px;
}
.row {
    height: 30px;
    display: flex;
    align-items: center;
}
.row label, .label {
    width: 73px;
    flex: none;
}
.select-wrap {
    flex: 1;
    position: relative;
}
.select-wrap select {
    width: 100%;
    height: 26px;
    padding: 0 20px 0 23px;
    appearance: none;
    background: #fff;
    border: 1px solid #ccc;
    border-radius: 0;
    font: inherit;
    color: #333;
}
.select-icon {
    position: absolute;
    left: 4px;
    top: 5px;
    width: 16px;
    height: 16px;
}
.select-wrap .caret {
    position: absolute;
    right: 5px;
    top: 11px;
    width: 6px;
}
.picker {
    height: 26px;
    padding: 0 6px 0 8px;
    gap: 4px;
    background: #0696d7;
    color: #fff;
}
.clear {
    margin-left: 11px;
    color: #555;
}
.clear svg {
    width: 9px;
    height: 9px;
}
.types {
    gap: 5px;
}
.types .label {
    width: 68px;
}
.types button {
    width: 24px;
    height: 26px;
    justify-content: center;
}
.types .on {
    background: #0696d7;
}
.types svg, .pivot svg {
    width: 16px;
    height: 16px;
}
.pivot {
    margin-left: 4px;
}
.row input[type="text"] {
    flex: 1;
    min-width: 0;
    height: 20px;
    margin-left: 7px;
    padding: 0 2px;
    border: 1px solid #c8c8c8;
    background: #fff;
    font: inherit;
    color: #333;
}
.row > .caret {
    width: 6px;
    margin: 0 5px 0 2px;
}
.row input[type="checkbox"] {
    appearance: none;
    width: 13px;
    height: 13px;
    margin: 0 0 0 5px;
    border: 1px solid #555;
    border-radius: 3px;
    background: linear-gradient(#f4f4f4, #ccc);
}
.dialog-foot {
    height: 36px;
    display: flex;
    align-items: center;
    gap: 10px;
    padding: 0 11px 0 8px;
    border-top: 1px solid #c8c8c8;
}
.info {
    width: 12px;
    height: 12px;
    margin-right: auto;
}
.dialog-foot button {
    width: 60px;
    height: 19px;
    justify-content: center;
    border: 1px solid #bbb;
    font-size: 12px;
    color: #555;
}
.dialog-foot button:disabled {
    color: #bbb;
    border-color: #ccc;
}

/* floating over the canvas */
.value-box {
    position: absolute;
    left: 818px;
    top: 734px;
    height: 22px;
    display: flex;
    align-items: center;
    padding: 0 8px 0 5px;
    background: #f1f1f1;
}
.dots {
    width: 4px;
    height: 18px;
    margin-right: 15px;
    background: radial-gradient(circle at 1px 1px, #ccc 1px, transparent 1px) 0 0 / 3px 3px;
}
.value-box input {
    width: 66px;
    height: 17px;
    padding: 0;
    border: 1px solid #c8c8c8;
    outline: 0;
    text-align: center;
    font-family: "Liberation Sans", Arial, sans-serif;
    font-size: 11px;
    color: #333;
}
.value-box input::selection {
    background: #0078d7;
    color: #fff;
}
.value-box .caret {
    width: 6px;
    margin: 0 10px 0 5px;
}
.pivot-icon {
    width: 16px;
    height: 16px;
}
.tooltip {
    position: absolute;
    left: 1730px;
    top: 827px;
    padding: 0 4px;
    background: #f1f1f1;
    border: 1px solid #777;
    font-family: Roboto, sans-serif;
    font-size: 13px;
    line-height: 12px;
    color: #000;
}

/* bottom bar */
footer {
    position: absolute;
    left: 4px;
    right: 0;
    bottom: 2px;
    display: flex;
    justify-content: space-between;
    align-items: flex-end;
}
.comments {
    width: 300px;
    padding-left: 12px;
    border-top: 0;
}
.navbar {
    height: 24px;
    display: flex;
    align-items: center;
    gap: 10px;
    padding: 0 16px 0 2px;
    background: #f1f1f1;
}
.navbar button {
    gap: 3px;
}
.navbar .split {
    margin-left: 8px;
}
.navbar svg:not(.caret) {
    width: 16px;
    height: 16px;
}
.navbar .caret {
    width: 6px;
    margin-right: -3px;
}
.status {
    width: 300px;
    padding: 0 33px 6px 0;
    text-align: right;
    font-weight: bold;
}
```

FILE: grid.js
```javascript
// ground plane in perspective, i runs along the red axis and j along the green one
const grid = document.getElementById('grid');
const MIN_I = -11.2;
const MIN_J = -11;
const MAX = 14;

function project(i, j) {
    const w = 1 - 0.0269 * (i + j);
    return [(1124.2 + 70.7 * i - 139.48 * j) / w, -1451.3 + 2447.8 / w];
}

function line(i1, j1, i2, j2, cls) {
    const [x1, y1] = project(i1, j1);
    const [x2, y2] = project(i2, j2);
    const el = document.createElementNS('http://www.w3.org/2000/svg', 'line');
    el.setAttribute('x1', x1);
    el.setAttribute('y1', y1);
    el.setAttribute('x2', x2);
    el.setAttribute('y2', y2);
    el.setAttribute('class', cls);
    grid.appendChild(el);
}

// minor lines first so the major ones stay on top
for (const major of [false, true]) {
    for (let n = -55; n <= MAX * 5; n++) {
        if ((n % 5 === 0) !== major || n === 0) continue;
        const cls = major ? 'grid-major' : 'grid-minor';
        line(n / 5, MIN_J, n / 5, MAX, cls);
        line(MIN_I, n / 5, MAX, n / 5, cls);
    }
}
line(MIN_I, MIN_J, MIN_I, MAX, 'grid-edge');
line(MIN_I, MIN_J, MAX, MIN_J, 'grid-edge');
line(MIN_I, 0, MAX, 0, 'axis-red');
line(0, MIN_J, 0, MAX, 'axis-green');

// the floating distance box opens with its value selected
const value = document.getElementById('value');
value.focus();
value.select();
```
